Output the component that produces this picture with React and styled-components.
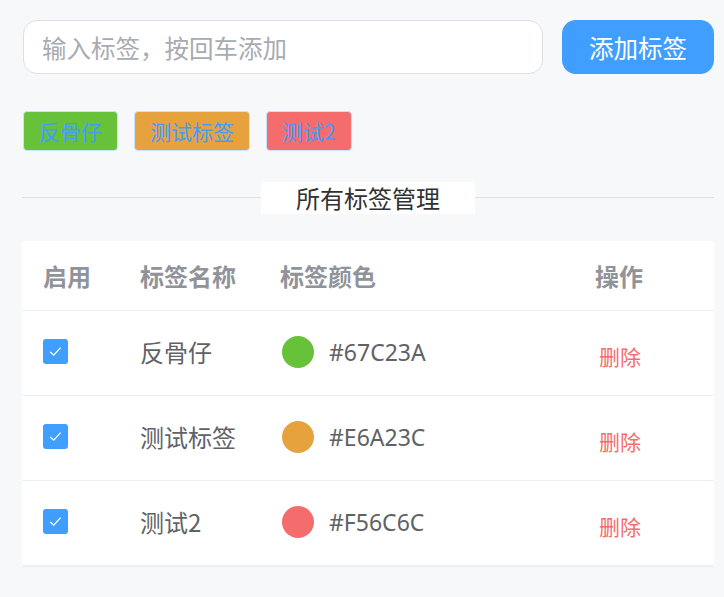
import React, { useState } from "react";
import styled, { createGlobalStyle } from "styled-components";

const GlobalStyle = createGlobalStyle`
  html, body {
    margin: 0;
    padding: 0;
    background: #f7f8fa;
  }
  body {
    font-family: "Noto Sans", "Noto Sans CJK SC", sans-serif;
  }
`;

const initialTags = [
  { id: 1, name: "反骨仔", color: "#67C23A", enabled: true },
  { id: 2, name: "测试标签", color: "#E6A23C", enabled: true },
  { id: 3, name: "测试2", color: "#F56C6C", enabled: true },
];

function CheckIcon() {
  return (
    <svg width="17" height="17" viewBox="0 0 17 17">
      <path d="M3.2 9 L6.8 12.2 L13.6 4.6" fill="none" stroke="#fff" strokeWidth="1.3" />
    </svg>
  );
}

export default function App() {
  const [tags, setTags] = useState(initialTags);
  const [text, setText] = useState("");

  const addTag = () => {
    if (text.trim() === "") return;
    setTags([...tags, { id: Date.now(), name: text.trim(), color: "#409EFF", enabled: true }]);
    setText("");
  };

  const toggle = (id) => {
    setTags(tags.map((t) => (t.id === id ? { ...t, enabled: !t.enabled } : t)));
  };

  const remove = (id) => {
    setTags(tags.filter((t) => t.id !== id));
  };

  return (
    <Page>
      <GlobalStyle />
      <InputRow>
        <TagInput
          placeholder="输入标签，按回车添加"
          value={text}
          onChange={(e) => setText(e.currentTarget.value)}
          onKeyDown={(e) => e.key === "Enter" && addTag()}
        />
        <AddButton onClick={addTag}>添加标签</AddButton>
      </InputRow>

      <TagList>
        {tags.filter((t) => t.enabled).map((t) => (
          <Tag key={t.id} $bg={t.color}>{t.name}</Tag>
        ))}
      </TagList>

      <Divider>
        <DividerText>所有标签管理</DividerText>
      </Divider>

      <Table>
        <HeadRow>
          <HeadCell>启用</HeadCell>
          <HeadCell>标签名称</HeadCell>
          <HeadCell>标签颜色</HeadCell>
          <HeadCell>操作</HeadCell>
        </HeadRow>
        {tags.map((t, i) => (
          <Row key={t.id} $last={i === tags.length - 1}>
            <Cell>
              <Check $on={t.enabled} onClick={() => toggle(t.id)}>
                {t.enabled && <CheckIcon />}
              </Check>
            </Cell>
            <Cell><Name>{t.name}</Name></Cell>
            <Cell>
              <Swatch $color={t.color} />
              <Hex>{t.color}</Hex>
            </Cell>
            <Cell>
              <DeleteLink onClick={() => remove(t.id)}>删除</DeleteLink>
            </Cell>
          </Row>
        ))}
      </Table>
    </Page>
  );
}

const Page = styled.div`
  padding: 20px 10px 30px 22px;
  font-family: "Noto Sans CJK SC", sans-serif;
`;

const InputRow = styled.div`
  display: flex;
  gap: 19px;
  height: 54px;
`;

const TagInput = styled.input`
  flex: 1;
  box-sizing: border-box;
  height: 54px;
  margin-left: 1px;
  border: 1px solid #dcdfe6;
  border-radius: 14px;
  background: #fff;
  padding: 0 18px;
  font-family: "Noto Sans CJK SC", sans-serif;
  font-size: 24.5px;
  color: #606266;
  outline: none;

  &::placeholder {
    color: #a8abb2;
  }
`;

const AddButton = styled.button`
  width: 152px;
  height: 54px;
  border: none;
  border-radius: 14px;
  background: #409eff;
  color: #fff;
  font-family: "Noto Sans CJK SC", sans-serif;
  font-size: 24.5px;
  cursor: pointer;
`;

const TagList = styled.div`
  display: flex;
  gap: 16px;
  margin-top: 37px;
  padding-left: 1px;
`;

const Tag = styled.span`
  display: inline-flex;
  align-items: center;
  box-sizing: border-box;
  height: 40px;
  padding: 0 15px;
  border: 1px solid #c6e2ff;
  border-radius: 4px;
  background: ${(p) => p.$bg};
  color: #409eff;
  font-size: 21px;
`;

const Divider = styled.div`
  display: flex;
  align-items: center;
  justify-content: center;
  height: 1px;
  margin: 46px 0 43px;
  background: #dcdfe6;
`;

const DividerText = styled.span`
  flex: none;
  background: #fff;
  padding: 0 35px;
  line-height: 32px;
  font-size: 24px;
  color: #303133;
`;

const Table = styled.div`
  background: #fff;
  border-bottom: 2px solid #ebeef5;
`;

const columns = "97px 140px 315px 140px";

const HeadRow = styled.div`
  display: grid;
  grid-template-columns: ${columns};
  height: 69px;
  align-items: center;
  border-bottom: 1px solid #ebeef5;
`;

const HeadCell = styled.div`
  padding-left: 21px;
  font-size: 24px;
  font-weight: bold;
  color: #909399;
`;

const Row = styled.div`
  display: grid;
  grid-template-columns: ${columns};
  height: 84px;
  align-items: center;
  border-bottom: ${(p) => (p.$last ? "none" : "1px solid #ebeef5")};
`;

const Cell = styled.div`
  display: flex;
  align-items: center;
  padding-left: 21px;
  margin-top: -3px;
`;

const Check = styled.span`
  display: inline-flex;
  align-items: center;
  justify-content: center;
  width: 25px;
  height: 25px;
  border-radius: 3px;
  background: ${(p) => (p.$on ? "#409eff" : "#fff")};
  border: ${(p) => (p.$on ? "none" : "1px solid #dcdfe6")};
  cursor: pointer;
`;

const Name = styled.span`
  font-size: 24px;
  color: #606266;
`;

const Swatch = styled.span`
  width: 32px;
  height: 32px;
  margin-left: 2px;
  border-radius: 50%;
  background: ${(p) => p.$color};
`;

const Hex = styled.span`
  margin-left: 15px;
  font-family: "Noto Sans", sans-serif;
  font-size: 23px;
  color: #606266;
`;

const DeleteLink = styled.span`
  margin: 8px 0 0 4px;
  font-size: 21px;
  color: #f56c6c;
  cursor: pointer;
`;
